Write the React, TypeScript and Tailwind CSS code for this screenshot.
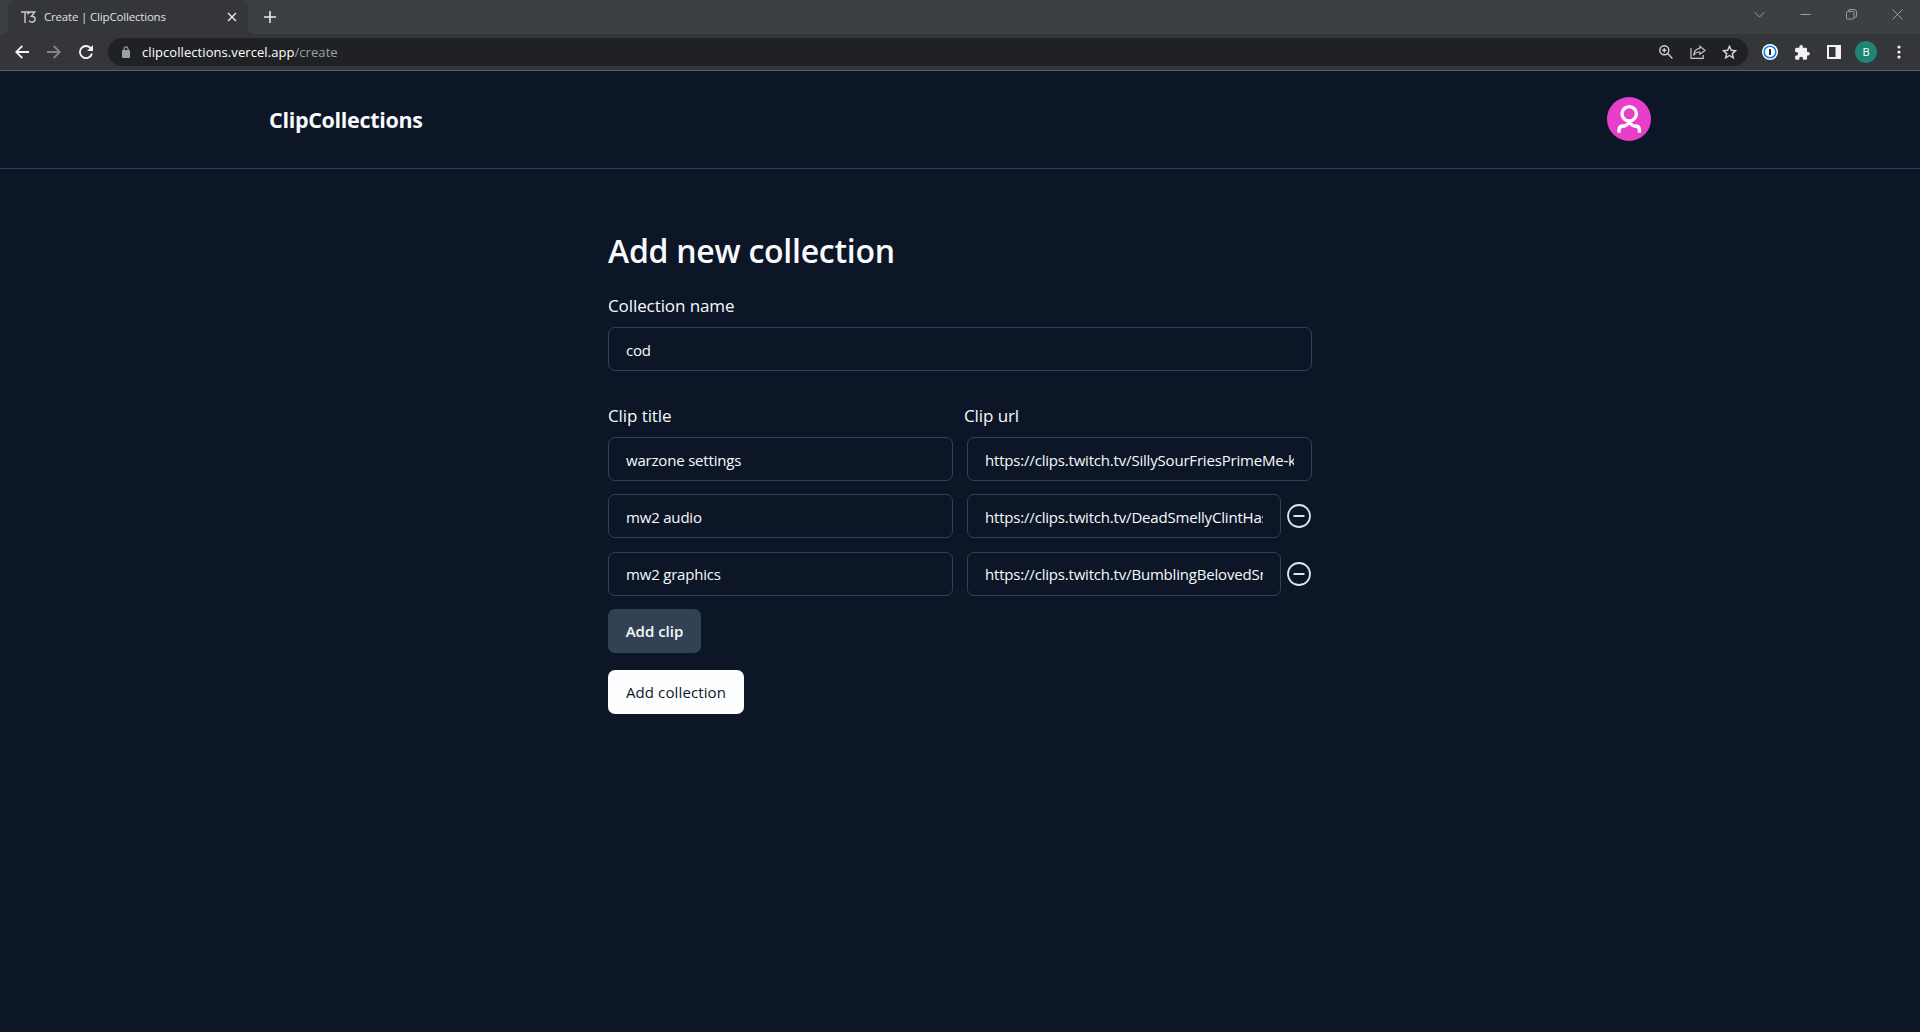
import type { ReactNode } from "react";

function Field({ value, className = "" }: { value: string; className?: string }) {
  return (
    <div className={`flex h-11 items-center rounded-[7px] border border-[#334155] px-[17px] text-[15px] leading-6 text-[#f8fafc] ${className}`}>
      <span className="block min-w-0 flex-1 overflow-hidden pt-[1.6px] whitespace-nowrap tracking-[-0.19px]">{value}</span>
    </div>
  );
}

function RemoveIcon() {
  return (
    <button aria-label="Remove clip" className="mr-px ml-1.5 shrink-0">
      <svg width="24" height="24" viewBox="0 0 24 24" fill="none" stroke="#dbe4f0" strokeWidth="1.8" strokeLinecap="round">
        <circle cx="12" cy="12" r="11" />
        <path d="M7.2 12h9.6" />
      </svg>
    </button>
  );
}

function Row({ title, url, removable = false }: { title: string; url: string; removable?: boolean }) {
  return (
    <div className="grid grid-cols-2 gap-3.5">
      <Field value={title} />
      <div className="flex min-w-0 items-center">
        <Field value={url} className="min-w-0 flex-1" />
        {removable && <RemoveIcon />}
      </div>
    </div>
  );
}

function Label({ children }: { children: ReactNode }) {
  return <div className="text-[17px] leading-7 tracking-[-0.09px]">{children}</div>;
}

function TabStrip() {
  return (
    <div className="flex h-[34px] bg-[#3c4043] text-[#dfe1e5]">
      <div className="w-2 bg-[#35363a]">
        <div className="h-full rounded-br-[7px] bg-[#3c4043]" />
      </div>
      <div className="flex w-[240px] items-center rounded-t-lg bg-[#35363a] pl-[13px]">
        <svg width="15" height="12" viewBox="0 0 15 12" fill="none" stroke="#c9cbce" strokeWidth="1.4">
          <path d="M0 1h9L6.4 3.2M4 1.5V12M9.3 1h4.4l-3.2 4.2c2.2-.2 3.6 1 3.6 2.9 0 2-1.5 3.1-3.2 3.1-1.3 0-2.2-.6-2.8-1.5" />
        </svg>
        <span className="ml-2 flex-1 text-[11.5px] tracking-[-0.18px] whitespace-nowrap">Create | ClipCollections</span>
        <svg className="mr-[11px]" width="10" height="10" viewBox="0 0 10 10" stroke="#e8eaed" strokeWidth="1.4">
          <path d="m1 1 8 8M9 1 1 9" />
        </svg>
      </div>
      <div className="w-2 bg-[#35363a]">
        <div className="h-full rounded-bl-[7px] bg-[#3c4043]" />
      </div>
      <svg className="ml-2 mt-[11px]" width="12" height="12" viewBox="0 0 12 12" stroke="#e8eaed" strokeWidth="1.6">
        <path d="M6 0v12M0 6h12" />
      </svg>
      <div className="mt-[9px] mr-[17px] ml-auto flex gap-[35px]">
        <svg width="11" height="11" viewBox="0 0 11 11" fill="none" stroke="#9a9c9e"><path d="m.5 3 5 5 5-5" /></svg>
        <svg width="11" height="11" viewBox="0 0 11 11" fill="none" stroke="#9a9c9e"><path d="M.5 5.5h10" /></svg>
        <svg width="11" height="11" viewBox="0 0 11 11" fill="none" stroke="#9a9c9e">
          <rect x=".5" y="2.5" width="7.5" height="7.5" rx="1.2" />
          <path d="M2.5 2.5V2A1.5 1.5 0 0 1 4 .5h4A2.5 2.5 0 0 1 10.5 3v4A1.5 1.5 0 0 1 9 8.5h-.5" />
        </svg>
        <svg width="11" height="11" viewBox="0 0 11 11" fill="none" stroke="#9a9c9e"><path d="m.5.5 10 10M10.5.5l-10 10" /></svg>
      </div>
    </div>
  );
}

function Toolbar() {
  return (
    <div className="flex h-[37px] items-center border-b border-[#5a6070] bg-[#35363a]">
      <svg className="ml-[15px] shrink-0" width="14" height="14" viewBox="0 0 14 14" fill="none" stroke="#f1f3f4" strokeWidth="1.8">
        <path d="M14 7H1.500M7.300.8 1.200 7l6.100 6.200" />
      </svg>
      <svg className="ml-[18px] shrink-0" width="14" height="14" viewBox="0 0 14 14" fill="none" stroke="#85878a" strokeWidth="1.8">
        <path d="M0 7h12.500M6.700.8 12.800 7l-6.100 6.200" />
      </svg>
      <svg className="ml-[18px] shrink-0" width="14" height="14" viewBox="0 0 14 14" fill="none" stroke="#f1f3f4" strokeWidth="1.9">
        <path d="M12.2 3.7A6.1 6.1 0 1 0 13 8.6" />
        <path d="M14 0v6H8z" fill="#f1f3f4" stroke="none" />
      </svg>
      <div className="ml-[15px] flex h-7 flex-1 items-center rounded-full bg-[#202124] pl-3.5">
        <svg width="8" height="12" viewBox="0 0 8 12" fill="#9aa0a6">
          <rect y="4" width="8" height="8" rx="1" />
          <path d="M2 4.5V2.8a2 2 0 0 1 4 0v1.7" fill="none" stroke="#9aa0a6" strokeWidth="1.2" />
        </svg>
        <span className="ml-3 pt-px text-[13px] tracking-[0.07px] text-white">
          clipcollections.vercel.app<span className="text-[#9aa0a6]">/create</span>
        </span>
        <svg className="ml-auto" width="14" height="14" viewBox="0 0 14 14" fill="none" stroke="#d0d2d5" strokeWidth="1.4">
          <circle cx="5.3" cy="5.3" r="4.5" />
          <path d="m8.6 8.6 4.8 4.8M5.3 3.2v4.2M3.2 5.3h4.2" />
        </svg>
        <svg className="ml-[17px]" width="16" height="14" viewBox="0 0 16 14" fill="none" stroke="#c4c6c9" strokeWidth="1.2">
          <path d="M1 3v10.3h12.2V10" />
          <path d="M9.8 1.2 15 5.4 9.8 9.3V7C6.8 7 5 8 3.7 10.3 4 6.2 6.3 3.8 9.8 3.4z" strokeLinejoin="round" />
        </svg>
        <svg className="mr-[11px] ml-4" width="15" height="14" viewBox="0 0 15 14" fill="none" stroke="#d8dadd" strokeWidth="1.4">
          <path d="m7.5 1.3 1.8 4 4.3.4-3.3 2.9 1 4.2-3.8-2.3-3.8 2.3 1-4.2-3.3-2.9 4.3-.4z" />
        </svg>
      </div>
      <svg className="ml-3.5" width="16" height="16" viewBox="0 0 16 16">
        <circle cx="8" cy="8" r="8" fill="#fff" />
        <circle cx="8" cy="8" r="5.8" fill="#fff" stroke="#1b7fe8" strokeWidth="1.6" />
        <rect x="7" y="5" width="2" height="6" rx=".5" fill="#1c2b45" />
      </svg>
      <svg className="ml-[17px]" width="15" height="15" viewBox="1.8 1 21.4 21.2" fill="#f1f3f4">
        <path d="M20.5 11H19V7a2 2 0 0 0-2-2h-4V3.5a2.5 2.5 0 0 0-5 0V5H4a2 2 0 0 0-2 2v3.8h1.5a2.7 2.7 0 0 1 0 5.4H2V20a2 2 0 0 0 2 2h3.8v-1.5a2.7 2.7 0 0 1 5.4 0V22H17a2 2 0 0 0 2-2v-4h1.5a2.5 2.5 0 0 0 0-5z" />
      </svg>
      <svg className="ml-[17px]" width="14" height="14" viewBox="0 0 14 14">
        <path fill="#f1f3f4" fillRule="evenodd" d="M0 0h14v14H0zM2 2v10h6.5V2z" />
      </svg>
      <div className="ml-3.5 flex size-[22px] items-center justify-center rounded-full bg-[#1f8473] text-[11px] text-white">B</div>
      <svg className="mr-[19px] ml-5" width="4" height="14" viewBox="0 0 4 14" fill="#f1f3f4">
        <circle cx="2" cy="2" r="1.6" /><circle cx="2" cy="7" r="1.6" /><circle cx="2" cy="12" r="1.6" />
      </svg>
    </div>
  );
}

export default function App() {
  return (
    <div className="flex h-[1032px] w-full flex-col overflow-hidden bg-[#0d1627] font-['Open_Sans','Noto_Sans',sans-serif] text-[#f8fafc]">
      <TabStrip />
      <Toolbar />
      <header className="h-[98px] border-b border-[#334155]">
        <div className="mx-auto flex w-[1382px] items-start justify-between pt-[26px]">
          <div className="pt-[7px] text-[21.5px] leading-8 font-bold tracking-[-0.31px]">ClipCollections</div>
          <svg width="44" height="44" viewBox="0 0 44 44" fill="none" stroke="#fff" strokeWidth="3.3">
            <circle cx="22" cy="22" r="22" fill="#e83fca" stroke="none" />
            <circle cx="22.2" cy="16.8" r="7.2" />
            <path d="M12 35.8v-2.600c0-2.800 1.300-4.200 4-4.200h1.200c2.200 0 3-2 5-3.200 2 1.200 2.800 3.200 5 3.200h1.200c2.700 0 4 1.400 4 4.200v2.600" />
          </svg>
        </div>
      </header>
      <main className="mx-auto w-[704px] pt-[62px]">
        <h1 className="text-[32px] leading-10 font-semibold tracking-[-0.26px]">Add new collection</h1>
        <div className="mt-[21px]"><Label>Collection name</Label></div>
        <Field value="cod" className="mt-[7px]" />
        <div className="mt-[31px] grid grid-cols-[356px_1fr]">
          <Label>Clip title</Label>
          <Label>Clip url</Label>
        </div>
        <div className="mt-[7.15px] flex flex-col gap-[13.2px]">
          <Row title="warzone settings" url="https://clips.twitch.tv/SillySourFriesPrimeMe-kXyQ" />
          <Row title="mw2 audio" url="https://clips.twitch.tv/DeadSmellyClintHassaanChop" removable />
          <Row title="mw2 graphics" url="https://clips.twitch.tv/BumblingBelovedSnakeTheThing" removable />
        </div>
        <div className="mt-[13px] flex flex-col items-start gap-[17px] text-[15px] leading-6">
          <button className="h-11 w-[93px] rounded-[7px] bg-[#334155] font-semibold">Add clip</button>
          <button className="h-11 w-[136px] rounded-[7px] bg-[#fcfdfe] font-medium tracking-[0.12px] text-[#0f172a]">Add collection</button>
        </div>
      </main>
    </div>
  );
}
